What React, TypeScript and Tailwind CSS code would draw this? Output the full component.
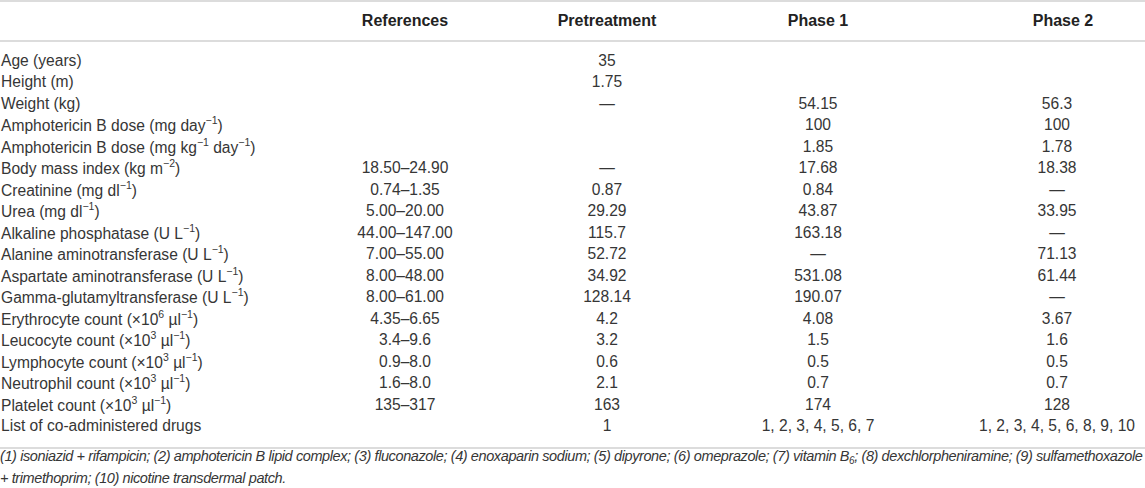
import React from "react";

type Row = { label: React.ReactNode; ref?: string; pre?: string; p1?: string; p2?: string };

const Sup = ({ children }: { children: React.ReactNode }) => (
  <sup className="text-[10.5px] leading-none relative -top-[1px] align-super">{children}</sup>
);
const M1 = () => <Sup>−1</Sup>;

const rows: Row[] = [
  { label: "Age (years)", pre: "35" },
  { label: "Height (m)", pre: "1.75" },
  { label: "Weight (kg)", pre: "—", p1: "54.15", p2: "56.3" },
  { label: <>Amphotericin B dose (mg day<M1 />)</>, p1: "100", p2: "100" },
  { label: <>Amphotericin B dose (mg kg<M1 /> day<M1 />)</>, p1: "1.85", p2: "1.78" },
  { label: <>Body mass index (kg m<Sup>−2</Sup>)</>, ref: "18.50–24.90", pre: "—", p1: "17.68", p2: "18.38" },
  { label: <>Creatinine (mg dl<M1 />)</>, ref: "0.74–1.35", pre: "0.87", p1: "0.84", p2: "—" },
  { label: <>Urea (mg dl<M1 />)</>, ref: "5.00–20.00", pre: "29.29", p1: "43.87", p2: "33.95" },
  { label: <>Alkaline phosphatase (U L<M1 />)</>, ref: "44.00–147.00", pre: "115.7", p1: "163.18", p2: "—" },
  { label: <>Alanine aminotransferase (U L<M1 />)</>, ref: "7.00–55.00", pre: "52.72", p1: "—", p2: "71.13" },
  { label: <>Aspartate aminotransferase (U L<M1 />)</>, ref: "8.00–48.00", pre: "34.92", p1: "531.08", p2: "61.44" },
  { label: <>Gamma-glutamyltransferase (U L<M1 />)</>, ref: "8.00–61.00", pre: "128.14", p1: "190.07", p2: "—" },
  { label: <>Erythrocyte count (×10<Sup>6</Sup> µl<M1 />)</>, ref: "4.35–6.65", pre: "4.2", p1: "4.08", p2: "3.67" },
  { label: <>Leucocyte count (×10<Sup>3</Sup> µl<M1 />)</>, ref: "3.4–9.6", pre: "3.2", p1: "1.5", p2: "1.6" },
  { label: <>Lymphocyte count (×10<Sup>3</Sup> µl<M1 />)</>, ref: "0.9–8.0", pre: "0.6", p1: "0.5", p2: "0.5" },
  { label: <>Neutrophil count (×10<Sup>3</Sup> µl<M1 />)</>, ref: "1.6–8.0", pre: "2.1", p1: "0.7", p2: "0.7" },
  { label: <>Platelet count (×10<Sup>3</Sup> µl<M1 />)</>, ref: "135–317", pre: "163", p1: "174", p2: "128" },
  { label: "List of co-administered drugs", pre: "1", p1: "1, 2, 3, 4, 5, 6, 7", p2: "1, 2, 3, 4, 5, 6, 8, 9, 10" },
];

const cols = "grid grid-cols-[263px_284px_120px_302px_176px]";

export default function App() {
  return (
    <div
      className="w-[1145px] h-[488px] bg-white text-[#363636] overflow-hidden"
      style={{ fontFamily: '"Liberation Sans", Arial, sans-serif' }}
    >
      <div className="border-t-2 border-[#dcdcdc]" />
      <div className={`${cols} h-[38px] items-center font-bold text-[16px] text-[#222]`}>
        <div />
        <div className="text-center">References</div>
        <div className="text-center">Pretreatment</div>
        <div className="text-center">Phase 1</div>
        <div className="text-center pl-[12px]">Phase 2</div>
      </div>
      <div className="border-t-2 border-[#dcdcdc]" />
      <div className="pt-[8px] pb-[10px] text-[15.6px]">
        {rows.map((r, i) => (
          <div key={i} className={`${cols} h-[21.5px] items-center leading-none whitespace-nowrap`}>
            <div className="pl-[1px]">{r.label}</div>
            <div className="text-center">{r.ref}</div>
            <div className="text-center">{r.pre}</div>
            <div className="text-center">{r.p1}</div>
            <div className="text-center">{r.p2}</div>
          </div>
        ))}
      </div>
      <div className="border-t-2 border-[#dcdcdc]" />
      <div className="-mt-[4px] italic text-[14.5px] leading-[22px] tracking-[-0.4px] whitespace-nowrap">
        <div>
          (1) isoniazid + rifampicin; (2) amphotericin B lipid complex; (3) fluconazole; (4) enoxaparin sodium; (5)
          dipyrone; (6) omeprazole; (7) vitamin B<sub className="text-[10px] leading-none">6</sub>; (8)
          dexchlorpheniramine; (9) sulfamethoxazole
        </div>
        <div>+ trimethoprim; (10) nicotine transdermal patch.</div>
      </div>
    </div>
  );
}
